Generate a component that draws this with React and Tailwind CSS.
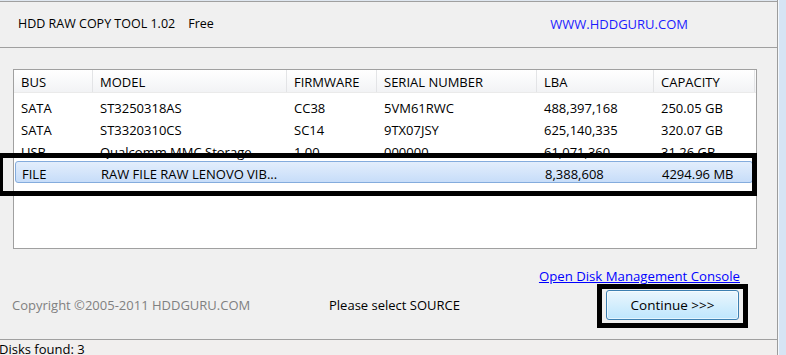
import React from 'react'

const COLUMNS = [
  { key: 'bus', label: 'BUS', width: 'w-[79px]' },
  { key: 'model', label: 'MODEL', width: 'w-[194px]' },
  { key: 'firmware', label: 'FIRMWARE', width: 'w-[90px]' },
  { key: 'serial', label: 'SERIAL NUMBER', width: 'w-[160px]' },
  { key: 'lba', label: 'LBA', width: 'w-[117px]' },
  { key: 'capacity', label: 'CAPACITY', width: 'w-[101px]' },
]

const DISKS = [
  { bus: 'SATA', model: 'ST3250318AS', firmware: 'CC38', serial: '5VM61RWC', lba: '488,397,168', capacity: '250.05 GB' },
  { bus: 'SATA', model: 'ST3320310CS', firmware: 'SC14', serial: '9TX07JSY', lba: '625,140,335', capacity: '320.07 GB' },
  { bus: 'USB', model: 'Qualcomm MMC Storage', firmware: '1.00', serial: '000000', lba: '61,071,360', capacity: '31.26 GB' },
  { bus: 'FILE', model: 'RAW FILE RAW LENOVO VIB...', firmware: '', serial: '', lba: '8,388,608', capacity: '4294.96 MB', selected: true },
]

const DiskRow = ({ disk }) => (
  <div
    className={`flex h-[22px] items-center ${
      disk.selected
        ? 'ml-[1px] mr-[3px] rounded-[3px] border border-[#84acdd] bg-gradient-to-b from-[#e3eefc] to-[#c7ddf9]'
        : 'border border-transparent'
    }`}
  >
    {COLUMNS.map(col => (
      <div key={col.key} className={`${col.width} shrink-0 pl-[6px] pt-[3px] leading-[16px] whitespace-nowrap overflow-hidden`}>
        {disk[col.key]}
      </div>
    ))}
  </div>
)

export default function App() {
  return (
    <div className="relative flex w-[786px] h-[355px] overflow-hidden bg-[#d6e4f4] text-black font-['Open_Sans',sans-serif]">
      {/* main window */}
      <div className="flex flex-col w-[778px] h-full shrink-0 border-r border-[#9c9c9c] bg-[#f0f0f0]">
        <div className="h-[1px] bg-[#dfe7f0]" />
        <div className="flex items-center h-[47px] border-t border-b border-[#a0a0a0] text-[12.5px]">
          <span className="pl-[18px]">HDD RAW COPY TOOL 1.02</span>
          <span className="pl-[13px]">Free</span>
          <span className="ml-auto mr-[89px] text-[13px] text-[#1c1cff]">WWW.HDDGURU.COM</span>
        </div>

        <div className="flex-1 flex flex-col">
          {/* disk list */}
          <div className="mt-[21px] ml-[13px] w-[744px] h-[180px] border border-[#a0a0a0] bg-white text-[13px]">
            <div className="flex h-[23px] items-center bg-gradient-to-b from-white to-[#f2f3f5] border-b border-[#eaeaea]">
              {COLUMNS.map(col => (
                <div key={col.key} className={`${col.width} shrink-0 h-full flex items-center pl-[7px] pt-[4px] border-r border-[#e3e4e6]`}>
                  {col.label}
                </div>
              ))}
            </div>
            <div className="mt-[2px]">
              {DISKS.map(disk => (
                <DiskRow key={disk.bus + disk.model} disk={disk} />
              ))}
            </div>
          </div>

          <div className="flex justify-end pr-[37px] mt-[19px] text-[13.2px] leading-[16px]">
            <span className="text-[#0000ff] underline">Open Disk Management Console</span>
          </div>

          <div className="flex items-center mt-[0px] text-[13px]">
            <span className="w-[329px] pl-[12px] text-[#808080]">Copyright ©2005-2011 HDDGURU.COM</span>
            <span>Please select SOURCE</span>
            <div className="ml-auto mr-[29px] border-[5px] border-black px-[4px] pt-[1px] pb-[3px]">
              <button className="w-[133px] h-[30px] rounded-[3px] border border-[#3c7fb1] bg-gradient-to-b from-[#eaf6fd] to-[#bee6fd] text-[13.5px] shadow-[inset_0_0_0_1px_rgba(255,255,255,0.6)]">
                Continue &gt;&gt;&gt;
              </button>
            </div>
          </div>
        </div>

        {/* status bar */}
        <div className="h-[16px] overflow-hidden border-t border-[#a0a0a0] bg-[#f1efee] text-[13px] leading-[15px] pt-[2px] -ml-[1px]">
          Disks found: 3
        </div>
      </div>
      <div className="w-[1px] bg-[#f4f8fc]" />

      {/* annotation around selected row */}
      <div className="absolute left-[-2px] top-[153px] w-[759px] h-[43px] border-[5px] border-black" />
    </div>
  )
}
